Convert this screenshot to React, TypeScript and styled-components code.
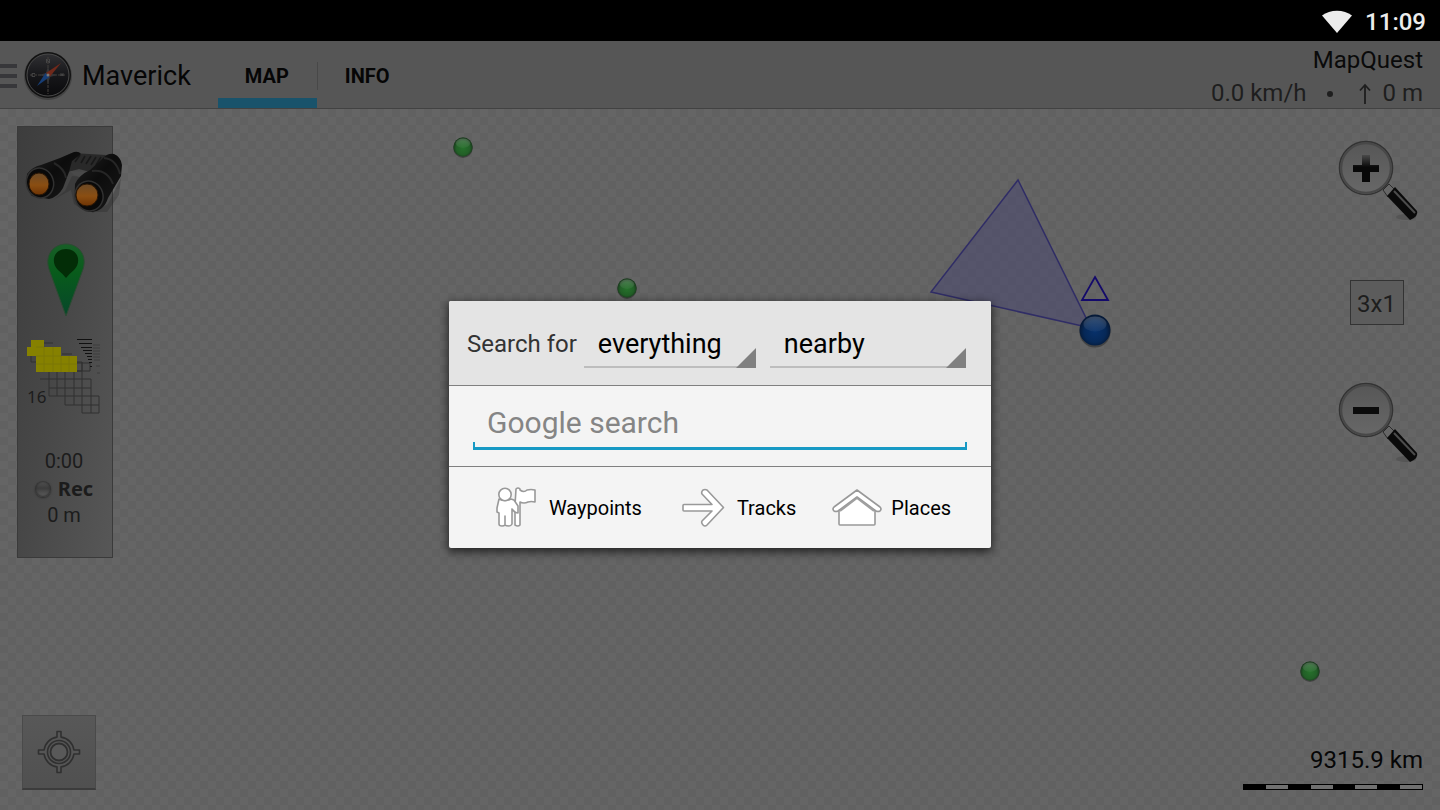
import React from "react";
import styled, { createGlobalStyle } from "styled-components";

const GlobalStyle = createGlobalStyle`
  * { box-sizing: border-box; }
  body { margin: 0; background: #000; font-family: Roboto, "Noto Sans", sans-serif; }
  button, input, select { font-family: inherit; }
  button { border: 0; padding: 0; background: none; cursor: pointer; }
  svg { display: block; flex: none; overflow: visible; }
`;

const Screen = styled.div`
  position: relative;
  display: flex;
  flex-direction: column;
  min-height: 100vh;
`;

const StatusBar = styled.div`
  display: flex;
  align-items: center;
  justify-content: flex-end;
  gap: 13px;
  height: 41px;
  padding: 2px 14px 0;
  background: #000;
  color: #ececec;
  font-size: 24px;
  font-weight: 500;
`;

const AppBar = styled.header`
  display: flex;
  align-items: stretch;
  height: 68px;
  background: #565656;
  border-bottom: 1px solid #424242;
`;

const Brand = styled.button`
  display: flex;
  align-items: center;
  gap: 10px;
  padding: 2px 27px 0 0;
  color: #060606;
  font-size: 27px;
`;

const BrandIcons = styled.span`
  display: flex;
  align-items: center;
  gap: 7px;
`;

const Tabs = styled.nav`
  display: flex;
`;

const Tab = styled.a<{ $active?: boolean }>`
  display: flex;
  align-items: center;
  padding: 12px 28px 0 27px;
  border-bottom: 10px solid ${(p) => (p.$active ? "#19536b" : "transparent")};
  color: #060606;
  font-size: 20px;
  font-weight: 700;
  text-decoration: none;
  line-height: 30px;
`;

const TabDivider = styled.span`
  width: 1px;
  margin: 21px 0 18px;
  background: #484848;
`;

const Stats = styled.div`
  margin-left: auto;
  padding: 3px 17px 0 0;
  text-align: right;
  font-size: 24px;
  line-height: 33px;
  color: #0a0a0a;
`;

const StatsRow = styled.div`
  display: flex;
  align-items: center;
  justify-content: flex-end;
  gap: 12px;
  color: #1e1e1e;
`;

const Dot = styled.span`
  width: 6px;
  height: 6px;
  margin: 0 14px 0 8px;
  border-radius: 50%;
  background: #1e1e1e;
`;

const MapArea = styled.main`
  position: relative;
  flex: 1;
  display: flex;
  justify-content: space-between;
  overflow: hidden;
  background: repeating-conic-gradient(#616161 0 25%, #656565 0 50%) 0 0 / 16px 16px;
`;

const MapLayer = styled.div`
  position: absolute;
  inset: 0;
`;

const Marker = styled.span<{ $x: number; $y: number }>`
  position: absolute;
  left: ${(p) => p.$x}px;
  top: ${(p) => p.$y}px;
  transform: translate(-50%, -50%);
`;

const LeftColumn = styled.div`
  position: relative;
  display: flex;
  flex-direction: column;
  justify-content: space-between;
  padding: 17px 17px 20px;
`;

const ToolPanel = styled.section`
  display: flex;
  flex-direction: column;
  width: 96px;
  padding: 23px 0 28px;
  border: 1px solid #3a3a3a;
  background: linear-gradient(100deg, #3d3d3d, #474747 45%, #575757);
  color: #1c1c1c;
`;

const ToolButton = styled.button<{ $gap: number; $inset: number }>`
  display: block;
  padding-left: ${(p) => p.$inset}px;
  margin-bottom: ${(p) => p.$gap}px;
`;

const Recorder = styled.button`
  display: flex;
  flex-direction: column;
  align-items: center;
  padding-right: 2px;
  color: #1c1c1c;
  font-size: 20px;
  line-height: 27px;
`;

const RecLabel = styled.span`
  display: flex;
  align-items: center;
  gap: 7px;
  font-family: "Noto Sans", sans-serif;
  font-weight: 700;
`;

const RecLight = styled.span`
  width: 16px;
  height: 16px;
  border-radius: 50%;
  background: linear-gradient(#555, #3c3c3c 45%, #606060);
  box-shadow: inset 0 0 2px 1px #303030, 0 1px 2px #2c2c2c;
`;

const LocateButton = styled.button`
  display: grid;
  place-items: center;
  width: 74px;
  height: 75px;
  margin-left: 5px;
  background: linear-gradient(#585858, #505050);
  border: 1px solid #4a4a4a;
  border-bottom: 2px solid #3c3c3c;
`;

const RightColumn = styled.div`
  position: relative;
  display: flex;
  flex-direction: column;
  align-items: flex-end;
  justify-content: space-between;
  padding: 30px 17px 20px;
`;

const ZoomControls = styled.div`
  display: flex;
  flex-direction: column;
  align-items: center;
  gap: 56px;
  padding-right: 5px;
`;

const ZoomButton = styled.button`
  padding-bottom: 1px;
`;

const LevelButton = styled.button`
  width: 54px;
  height: 45px;
  margin-right: 3px;
  border: 1px solid #333;
  background: #5c5c5c;
  color: #1e1e1e;
  font-size: 24px;
  line-height: 47px;
`;

const Scale = styled.div`
  width: 180px;
  text-align: right;
  font-size: 24px;
  line-height: 32px;
  color: #060606;
`;

const ScaleBar = styled.div`
  height: 6px;
  margin-top: 8px;
  border: 1px solid #000;
  background: repeating-linear-gradient(90deg, #000 0 12.5%, #707070 12.5% 25%);
`;

const DialogHost = styled.div`
  position: absolute;
  inset: 41px 0 0;
  display: flex;
  align-items: center;
  justify-content: center;
  padding-bottom: 2px;
`;

const Dialog = styled.form`
  width: 542px;
  border-radius: 2px;
  overflow: hidden;
  background: #f4f4f4;
  box-shadow: 0 3px 10px 1px rgba(0, 0, 0, 0.65);
`;

const FilterRow = styled.div`
  display: flex;
  align-items: center;
  height: 85px;
  padding: 2px 25px 0 18px;
  background: #e4e4e4;
  border-bottom: 1px solid #808080;
  color: #333;
  font-size: 24px;
`;

const Spinner = styled.div<{ $grow?: boolean }>`
  position: relative;
  width: 172px;
  flex: ${(p) => (p.$grow ? "1" : "none")};
  margin-left: ${(p) => (p.$grow ? 14 : 7)}px;

  svg {
    position: absolute;
    right: 0;
    bottom: 0;
    pointer-events: none;
  }
`;

const Select = styled.select`
  display: block;
  appearance: none;
  width: 100%;
  height: 48px;
  padding: 2px 0 0 14px;
  border: 0;
  border-bottom: 2px solid #bdbdbd;
  border-radius: 0;
  outline: 0;
  background: transparent;
  color: #000;
  font-size: 27px;
`;

const SearchRow = styled.div`
  height: 81px;
  padding: 14px 24px 0;
  border-bottom: 1px solid #808080;
`;

const SearchInput = styled.input`
  display: block;
  width: 100%;
  height: 50px;
  padding: 0 14px 6px;
  border: 0;
  outline: 0;
  color: #000;
  font-size: 30px;
  background:
    linear-gradient(#1799c4, #1799c4) bottom / 100% 3px no-repeat,
    linear-gradient(#1799c4, #1799c4) bottom left / 2px 8px no-repeat,
    linear-gradient(#1799c4, #1799c4) bottom right / 2px 8px no-repeat;

  &::placeholder { color: #858585; opacity: 1; }
`;

const Shortcuts = styled.div`
  display: flex;
  justify-content: center;
  gap: 33px;
  height: 81px;
  padding-right: 2px;
`;

const Shortcut = styled.button`
  display: flex;
  align-items: center;
  gap: 6px;
  color: #000;
  font-size: 20px;
`;

function Wifi() {
  return (
    <svg width="30" height="24" viewBox="0 0 30 24" aria-hidden="true">
      <path d="M15 23 0 5.500C8-1 22-1 30 5.500Z" fill="#ececec" />
    </svg>
  );
}

function Hamburger() {
  return (
    <svg width="17" height="26" viewBox="0 0 17 26" aria-hidden="true">
      <path d="M0 3H17M0 13H17M0 23H17" stroke="#37373a" strokeWidth="4" />
    </svg>
  );
}

function Compass() {
  return (
    <svg width="48" height="50" viewBox="0 0 48 50" aria-hidden="true">
      <defs>
        <linearGradient id="face" x1="0" y1="0" x2="0" y2="1">
          <stop offset="0" stopColor="#303033" />
          <stop offset=".5" stopColor="#17171a" />
          <stop offset="1" stopColor="#0a0a0c" />
        </linearGradient>
      </defs>
      <circle cx="24" cy="25" r="24" fill="#303030" opacity=".5" />
      <circle cx="24" cy="24" r="23" fill="#111" />
      <circle cx="24" cy="24" r="21" fill="url(#face)" stroke="#4a4a4a" strokeWidth="1" />
      <path d="M24 6V43M6 24H42" stroke="#45413c" strokeWidth="1" strokeDasharray="3 1" />
      <path d="m24 15 2 7 7 2-7 2-2 7-2-7-7-2 7-2Z" fill="#343436" />
      <path d="M22.500 12V8l3 4V8M11 22.500H8v3h3M37 22v3l1-2 1 2v-3" stroke="#4c4c4c" fill="none" strokeWidth=".8" />
      <path d="M37 12 26 25.500 22 22Z" fill="#70291b" />
      <path d="M13 35 21.500 22 25.500 26Z" fill="#173d74" />
      <circle cx="24" cy="24" r="1.500" fill="#777" />
    </svg>
  );
}

function UpArrow() {
  return (
    <svg width="12" height="20" viewBox="0 0 12 20" aria-hidden="true">
      <path d="M6 20V1M1 6.500 6 1l5 5.500" fill="none" stroke="#1e1e1e" strokeWidth="1.800" />
    </svg>
  );
}

function Binoculars() {
  return (
    <svg width="98" height="64" viewBox="0 0 98 64" aria-hidden="true">
      <defs>
        <linearGradient id="lens" x1="0" y1="0" x2="0" y2="1">
          <stop offset="0" stopColor="#6b4a27" />
          <stop offset=".55" stopColor="#8a4e12" />
          <stop offset="1" stopColor="#6d3304" />
        </linearGradient>
        <linearGradient id="barrel" x1="0" y1="0" x2="1" y2="1">
          <stop offset="0" stopColor="#222" />
          <stop offset=".45" stopColor="#0c0c0c" />
          <stop offset="1" stopColor="#191919" />
        </linearGradient>
      </defs>
      <path d="M29 50 41 41 48 26 60 27 52 38 56 56 69 63 84 54 97 28 95 45 83 62H62L50 54 47 40Z" fill="#252525" opacity=".3" />
      <path d="M36 9 48 3 82 5 76 14 66 22 55 19 44 22Z" fill="#292929" />
      <path d="M46 21 66 22 58 28 50 25Z" fill="#4a4a4a" />
      <path d="M45 11l6-7M51 12l5-7M57 13l4-7M62 14l5-8M67 15l5-8M72 15l5-8" stroke="#181818" strokeWidth="1.600" />
      <path d="M3 24Q8 17 17 15L36 8 50 2Q55 1 57 4L48 11 45 22 39 38Q34 47 25 49L8 46Q1 38 3 24Z" fill="url(#barrel)" />
      <path d="M51 34Q55 25 66 20L78 9Q83 3 90 4 97 7 98 15L97 26 84 48Q80 61 68 62 55 61 52 49Q50 41 51 34Z" fill="url(#barrel)" />
      <path d="M68 21Q83 19 89 34M80 8Q92 9 96 24M30 13Q41 19 42 28" fill="none" stroke="#262626" strokeWidth="2" />
      <ellipse cx="16" cy="33" rx="13.500" ry="15" transform="rotate(-18 16 33)" fill="#090909" stroke="#303030" strokeWidth="1.500" />
      <ellipse cx="15" cy="34" rx="10" ry="11" fill="url(#lens)" stroke="#2a1604" />
      <ellipse cx="65" cy="46" rx="14" ry="15" transform="rotate(-18 65 46)" fill="#090909" stroke="#303030" strokeWidth="1.500" />
      <ellipse cx="63" cy="45" rx="11" ry="11" fill="url(#lens)" stroke="#2a1604" />
    </svg>
  );
}

function Pin() {
  return (
    <svg width="38" height="74" viewBox="0 0 38 74" aria-hidden="true">
      <defs>
        <linearGradient id="pin" x1="0" y1="0" x2="0" y2="1">
          <stop offset="0" stopColor="#185f27" />
          <stop offset=".4" stopColor="#085b1b" />
          <stop offset="1" stopColor="#07472b" />
        </linearGradient>
      </defs>
      <path d="M19 73 3 29C-4 12 7 1 19 1s23 11 16 28Z" fill="url(#pin)" stroke="#2e4a33" strokeWidth="1" />
      <path d="M19 35q-3-4-8-8C3 19 7 6 19 6s16 13 8 21q-5 4-8 8Z" fill="#032d07" />
    </svg>
  );
}

function TileCache() {
  return (
    <svg width="74" height="78" viewBox="0 0 74 78" aria-label="Tile cache, zoom 16">
      <path
        d="M4 17v7H55v9H13M13 41H64M22 33V58M30 33V58M38 33V67M47 33V67M55 24V75M64 41V75M72 58V75M22 50H64M22 58H72M38 67H72M55 75H72M12 5H26M35 16H45M47 25H63V33H50"
        fill="none"
        stroke="#303030"
        strokeWidth="1"
      />
      <path d="M4 2H17V9H34V18H50V34H9V18H0V9H4Z" fill="#868100" />
      <path d="M9 9H17M17 9V34M26 9V34M34 18V34M42 18V34M9 18H34M9 26H50" stroke="#7a7606" fill="none" />
      <path d="M66 7h7M66 10h7M66 13h7M66 16h7M66 19h7M67 22h6M69 28h4M70 35h3" stroke="#3d3d3d" strokeWidth="1" />
      <path d="M50 1.500h15M52 5.500h13M54 9.500h11M56 12.500h9M58 15.500h7M60 18.500h5M61 21.500h4M62 24.500h3M63 28.500h2" stroke="#101010" strokeWidth="1" />
      <text x="0" y="65" fontSize="17" fontFamily="Noto Sans, sans-serif" fill="#1c1c1c">16</text>
    </svg>
  );
}

function Crosshair() {
  return (
    <svg width="44" height="44" viewBox="0 0 44 44" aria-hidden="true">
      <path
        d="M20 1.500h4v5.600A15 15 0 0 1 36.900 20h5.600v4h-5.600A15 15 0 0 1 24 36.900v5.600h-4v-5.600A15 15 0 0 1 7.100 24H1.500v-4h5.600A15 15 0 0 1 20 7.100Z"
        fill="#555"
        stroke="#303030"
        strokeWidth="1.600"
        strokeLinejoin="round"
      />
      <circle cx="22" cy="22" r="11.500" fill="none" stroke="#303030" strokeWidth="1.600" />
      <circle cx="22" cy="22" r="8.500" fill="#595959" stroke="#303030" strokeWidth="1.800" />
    </svg>
  );
}

function Magnifier({ plus }: { plus?: boolean }) {
  return (
    <svg width="80" height="84" viewBox="0 0 80 84" aria-hidden="true">
      <defs>
        <linearGradient id="glass" x1="0" y1="0" x2="0" y2="1">
          <stop offset="0" stopColor="#565656" />
          <stop offset="1" stopColor="#686868" />
        </linearGradient>
        <linearGradient id="sign" x1="0" y1="0" x2="0" y2="1">
          <stop offset="0" stopColor="#4a4a4a" />
          <stop offset=".45" stopColor="#080808" />
        </linearGradient>
      </defs>
      <ellipse cx="68" cy="78" rx="10" ry="3" fill="#4c4c4c" opacity=".6" />
      <circle cx="28" cy="29" r="26.500" fill="url(#glass)" stroke="#333" strokeWidth="1.600" />
      <circle cx="28" cy="29" r="24.800" fill="none" stroke="#484848" strokeWidth="2" />
      <path d="M45 51 51 45 57 51 50 58Z" fill="#666" stroke="#2b2b2b" />
      <path d="m49 57 8-9 22 24q2 5-7 9Z" fill="#0a0a0a" />
      <path d="M56 52 77 74" stroke="#4c4c4c" strokeWidth="2" />
      {plus ? (
        <path d="M24 16h8v10h9v7H32V43h-8V33H15v-7h9Z" fill="url(#sign)" />
      ) : (
        <path d="M15 26h26v7H15Z" fill="#0b0b0b" />
      )}
    </svg>
  );
}

function Ball({ size, blue }: { size: number; blue?: boolean }) {
  const id = blue ? "blue-ball" : "green-ball";
  return (
    <svg width={size} height={size} viewBox="0 0 32 32" aria-hidden="true">
      <defs>
        <radialGradient id={id} cx=".5" cy=".55" r=".5">
          <stop offset="0" stopColor={blue ? "#08316b" : "#26702b"} />
          <stop offset=".7" stopColor={blue ? "#062857" : "#225f27"} />
          <stop offset="1" stopColor={blue ? "#061a38" : "#1a3a1d"} />
        </radialGradient>
        <linearGradient id={`${id}-shine`} x1="0" y1="0" x2="0" y2="1">
          <stop offset="0" stopColor="#fff" stopOpacity=".2" />
          <stop offset="1" stopColor="#fff" stopOpacity=".04" />
        </linearGradient>
      </defs>
      <circle cx="16" cy="18" r="15.500" fill="#262626" opacity=".5" />
      <circle cx="16" cy="16" r="15.500" fill={`url(#${id})`} />
      <ellipse cx="16" cy="10" rx="11.500" ry="7.500" fill={`url(#${id}-shine)`} />
    </svg>
  );
}

function MapShapes() {
  return (
    <svg width="180" height="150" viewBox="930 70 180 150" aria-hidden="true">
      <path d="M1018 71 931 183 1091 219Z" fill="#3c3878" fillOpacity=".35" stroke="#302d66" strokeWidth="1.500" />
      <path d="M1095 168 1108 191H1082Z" fill="none" stroke="#140a6b" strokeWidth="1.800" />
    </svg>
  );
}

function Corner() {
  return (
    <svg width="20" height="20" viewBox="0 0 20 20" aria-hidden="true">
      <path d="M20 0V20H0Z" fill="#808080" />
    </svg>
  );
}

const outline = { fill: "#fff", stroke: "#999", strokeWidth: 1.6, strokeLinejoin: "round" as const };

function WaypointIcon() {
  return (
    <svg width="56" height="56" viewBox="0 0 56 56" aria-hidden="true">
      <g {...outline}>
        <path d="M29 9q2-2 4 0v1q4 3 7 0 4-1 8 0v12q-4-1-7 0-4 2-8 0v23q-2 2-5 0V25Z" />
        <path d="M12 19q6 3 12 0l3 1 4 6v7q-3 0-6-4v15q-1 2-3 2-3 0-4-1v-9 9q-1 1-3 1-3 0-3-2V33l-2-1 0-4Z" />
        <circle cx="18" cy="14.500" r="6.200" />
      </g>
    </svg>
  );
}

function TrackIcon() {
  return (
    <svg width="56" height="56" viewBox="0 0 56 56" aria-hidden="true">
      <path {...outline} d="M9 24.500H37L27 14q-1-2 1-4 2-1 4 0L48.500 27.500 32 45q-2 2-4 0-2-2-1-4L37 31H9q-1 0-1-1V25.500q0-1 1-1Z" />
    </svg>
  );
}

function PlaceIcon() {
  return (
    <svg width="56" height="56" viewBox="0 0 56 56" aria-hidden="true">
      <g {...outline}>
        <path d="M10 28 28 14 46 28V44q0 1-1 1H11q-1 0-1-1Z" />
        <path d="M28 10 51 27q2 2 0 4-2 1-4 0L28 17 9 31q-2 1-4 0-2-2 0-4Z" />
      </g>
      <path d="M11 31 28 18 45 31" fill="none" stroke="#a0a0a0" strokeWidth="2" />
    </svg>
  );
}

export default function App() {
  return (
    <Screen>
      <GlobalStyle />
      <StatusBar>
        <Wifi />
        <span>11:09</span>
      </StatusBar>

      <AppBar>
        <Brand type="button">
          <BrandIcons>
            <Hamburger />
            <Compass />
          </BrandIcons>
          Maverick
        </Brand>
        <Tabs>
          <Tab href="#map" $active>MAP</Tab>
          <TabDivider />
          <Tab href="#info">INFO</Tab>
        </Tabs>
        <Stats>
          <div>MapQuest</div>
          <StatsRow>
            <span>0.0 km/h</span>
            <Dot />
            <UpArrow />
            <span>0 m</span>
          </StatsRow>
        </Stats>
      </AppBar>

      <MapArea>
        <MapLayer>
          <Marker $x={1020} $y={145}><MapShapes /></Marker>
          <Marker $x={463} $y={38}><Ball size={20} /></Marker>
          <Marker $x={627} $y={179}><Ball size={20} /></Marker>
          <Marker $x={1310} $y={562}><Ball size={20} /></Marker>
          <Marker $x={1095} $y={221}><Ball size={32} blue /></Marker>
        </MapLayer>

        <LeftColumn>
          <ToolPanel>
            <ToolButton type="button" aria-label="Search" $inset={6} $gap={29}><Binoculars /></ToolButton>
            <ToolButton type="button" aria-label="Add waypoint" $inset={29} $gap={21}><Pin /></ToolButton>
            <ToolButton type="button" aria-label="Tile cache" $inset={9} $gap={32}><TileCache /></ToolButton>
            <Recorder type="button">
              <span>0:00</span>
              <RecLabel><RecLight />Rec</RecLabel>
              <span>0 m</span>
            </Recorder>
          </ToolPanel>
          <LocateButton type="button" aria-label="My location"><Crosshair /></LocateButton>
        </LeftColumn>

        <RightColumn>
          <ZoomControls>
            <ZoomButton type="button" aria-label="Zoom in"><Magnifier plus /></ZoomButton>
            <LevelButton type="button">3x1</LevelButton>
            <ZoomButton type="button" aria-label="Zoom out"><Magnifier /></ZoomButton>
          </ZoomControls>
          <Scale>
            9315.9 km
            <ScaleBar />
          </Scale>
        </RightColumn>
      </MapArea>

      <DialogHost>
        <Dialog role="dialog" aria-label="Search" onSubmit={(e) => e.preventDefault()}>
          <FilterRow>
            <label htmlFor="kind">Search for</label>
            <Spinner>
              <Select id="kind" defaultValue="everything">
                <option>everything</option>
              </Select>
              <Corner />
            </Spinner>
            <Spinner $grow>
              <Select aria-label="Area" defaultValue="nearby">
                <option>nearby</option>
              </Select>
              <Corner />
            </Spinner>
          </FilterRow>
          <SearchRow>
            <SearchInput type="text" aria-label="Google search" placeholder="Google search" />
          </SearchRow>
          <Shortcuts>
            <Shortcut type="button"><WaypointIcon />Waypoints</Shortcut>
            <Shortcut type="button"><TrackIcon />Tracks</Shortcut>
            <Shortcut type="button"><PlaceIcon />Places</Shortcut>
          </Shortcuts>
        </Dialog>
      </DialogHost>
    </Screen>
  );
}
